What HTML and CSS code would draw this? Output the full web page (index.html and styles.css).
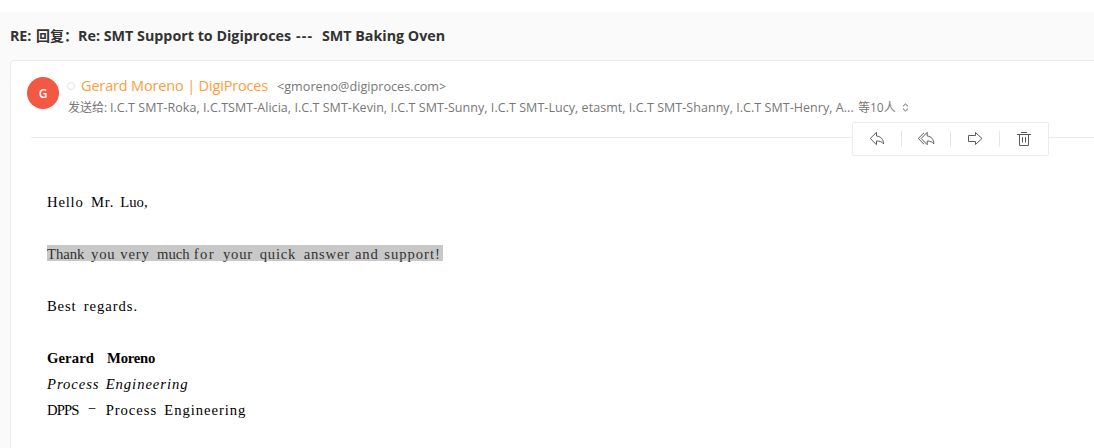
FILE: index.html
```html
<!DOCTYPE html>
<html lang="zh-CN">
<head>
<meta charset="utf-8">
<title>Mail</title>
<link rel="stylesheet" href="styles.css">
</head>
<body>
<main class="mail">
  <h1 class="subject"><span class="s1">RE:</span><span class="s2">回复：</span><span class="s3">Re: SMT Support to Digiproces</span><span class="s5">---</span><span class="s4">SMT Baking Oven</span></h1>
  <article class="card">
    <header class="head">
      <div class="avatar">G</div>
      <div class="meta">
        <div class="from"><i class="dot"></i><span class="name">Gerard Moreno | DigiProces</span><span class="addr">&lt;gmoreno@digiproces.com&gt;</span></div>
        <div class="to"><span class="label">发送给:</span><span class="list">I.C.T SMT-Roka, I.C.TSMT-Alicia, I.C.T SMT-Kevin, I.C.T SMT-Sunny, I.C.T SMT-Lucy, etasmt, I.C.T SMT-Shanny, I.C.T SMT-Henry, A...</span><span class="count">等10人</span><svg class="expand" width="7" height="9" viewBox="0 0 7 9"><path d="M1 3.3 3.5 1 6 3.3M1 5.7 3.5 8 6 5.7"/></svg></div>
      </div>
    </header>
    <nav class="tools">
      <span class="tool"><svg width="16" height="16" viewBox="0 0 16 16"><path d="M7.500 1.300 1.200 7.500l6.300 6.200v-3.600c3.200-.2 5.300.6 7 2.800 0-4.600-2.600-7.500-7-7.900z"/></svg></span>
      <span class="tool"><svg width="18" height="16" viewBox="0 0 18 16"><path d="M10.200 1.300 4.200 7.500l6 6.200v-3.600c3.100-.2 5.100.6 6.600 2.800 0-4.600-2.400-7.500-6.600-7.900zM7 1.800 1.200 7.500 7 13.200"/></svg></span>
      <span class="tool"><svg width="16" height="16" viewBox="0 0 16 16"><path d="M1.500 4.500h7v-3L15 7.500l-6.500 6v-3h-7z"/></svg></span>
      <span class="tool"><svg width="16" height="16" viewBox="0 0 16 16"><path d="M1 3.500h14M5 1.500h6M3.500 3.500v11h9v-11M6.500 6v5.500M9.500 6v5.500"/></svg></span>
    </nav>
    <div class="body">
      <p class="line"><span class="w6">Hello</span><span class="w4">Mr.</span><span class="tight">Luo,</span></p>
      <p class="line"><span class="selected"><span class="w6 tight">Thank</span> <span class="w4">you</span> <span class="w5">very</span> <span class="w5 tight">much</span> <span class="w4 wide">for</span> <span class="w5">your</span> <span class="w6">quick</span> <span class="w7">answer</span> <span class="w4">and</span> <span class="w8">support!</span></span></p>
      <p class="line"><span class="w5">Best</span><span class="wide">regards.</span></p>
      <div class="signature">
        <b class="line bold"><span class="given">Gerard</span><span>Moreno</span></b>
        <em class="line"><span class="w8">Process</span><span class="wide">Engineering</span></em>
        <span class="line"><span class="w5 caps">DPPS</span><span class="dash">−</span><span class="w8">Process</span><span class="wide">Engineering</span></span>
      </div>
    </div>
  </article>
</main>
</body>
</html>
```
FILE: styles.css
```css
* { box-sizing: border-box; }
body {
  margin: 0;
  padding-top: 12px;
  height: 448px;
  overflow: hidden;
  background: #fff;
  font-family: "Open Sans", "Noto Sans CJK SC", sans-serif;
}
.mail { height: 436px; padding-left: 10px; background: #fafafa; display: flex; flex-direction: column; white-space: nowrap; }
.subject { margin: 0; height: 48px; display: flex; font-size: 14.300px; line-height: 47px; font-weight: 700; color: #333; }
.s1 { width: 26px; letter-spacing: -0.1px; }
.s2 { width: 42px; font-size: 14px; }
.s3 { width: 218px; }
.s5 { width: 26px; letter-spacing: 1.2px; }
.s4 { letter-spacing: -0.02px; }
.card { flex: 1; width: 1110px; background: #fff; border: 1px solid #ececec; border-bottom: 0; border-radius: 4px 0 0 0; }
.head { height: 77px; margin-left: 20px; border-bottom: 1px solid #ececec; display: flex; }
.avatar { width: 32px; height: 32px; margin: 16px 0 0 -4px; border-radius: 50%; background: #f35844; color: #fff; font-size: 12px; font-weight: 600; line-height: 33px; text-align: center; }
.meta { margin: 14px 0 0 8px; }
.from { height: 21px; display: flex; align-items: center; }
.dot { width: 8px; height: 8px; border: 1px solid #e3e3e3; border-radius: 50%; margin-right: 6px; }
.name { width: 196px; color: #ff9c3b; font-size: 14.500px; letter-spacing: -0.16px; }
.addr { font-size: 12.600px; letter-spacing: 0.04px; color: #777; padding-top: 2px; }
.to { height: 22px; padding-left: 1px; display: flex; align-items: center; font-size: 12.500px; color: #777; }
.label { width: 42px; font-size: 12px; }
.list { width: 748px; letter-spacing: 0.045px; }
.count { width: 44px; font-size: 12px; }
.expand, .tool svg { fill: none; stroke: #5c5c5c; stroke-width: 1; }
.tools { position: absolute; left: 852px; top: 122px; width: 197px; height: 34px; display: grid; grid-template-columns: 48px 49px 49px 49px; align-items: center; background: #fff; border: 1px solid #ececec; border-radius: 2px; }
.tool { height: 16px; display: flex; align-items: center; justify-content: center; border-left: 1px solid #e6e6e6; }
.tool:first-child { border-left: 0; }
.body { padding: 51px 0 0 36px; font-family: "Liberation Serif", serif; font-size: 14.670px; line-height: 26px; letter-spacing: 0.8px; color: #000; }
.line { display: flex; margin: 0; height: 26px; }
p.line { margin-bottom: 26px; }
.selected { display: flex; width: 396px; height: 16px; margin-top: 4px; line-height: 18px; background: #c8c8c8; color: #333; }
.w4 { width: 29.330px; }
.w5 { width: 36.670px; }
.w6 { width: 44px; }
.w7 { width: 51.330px; }
.w8 { width: 58.670px; letter-spacing: 0.95px; }
.wide { letter-spacing: 0.95px; }
.tight { letter-spacing: 0; }
.w4.wide { letter-spacing: 1.4px; }
.caps { letter-spacing: -0.9px; }
.signature { display: flex; flex-direction: column; }
.bold { letter-spacing: -0.2px; }
.given { width: 60px; letter-spacing: 0.1px; }
.dash { width: 22px; padding-left: 4px; line-height: 22px; }
```
